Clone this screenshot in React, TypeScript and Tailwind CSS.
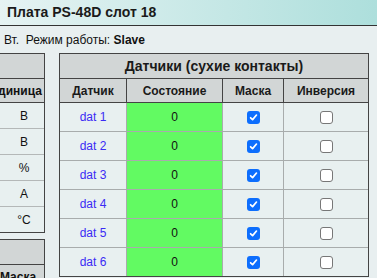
import React from "react";

const Checked = () => (
  <span className="inline-flex w-[13px] h-[13px] rounded-[3px] bg-[#0d6efd] items-center justify-center">
    <svg width="9" height="9" viewBox="0 0 10 10">
      <path d="M1.8 5.3 L4 7.4 L8.3 2.3" fill="none" stroke="white" strokeWidth="1.9" strokeLinecap="round" strokeLinejoin="round" />
    </svg>
  </span>
);

const Unchecked = () => (
  <span className="inline-block w-[13px] h-[13px] rounded-[3px] bg-white border border-[#777]" />
);

const units = ["В", "В", "%", "А", "°C"];

export default function App() {
  const rows = [1, 2, 3, 4, 5, 6];
  return (
    <div className="w-[377px] h-[278px] overflow-hidden bg-[#e8eff0] text-[#111] font-['Liberation_Sans',Arial,sans-serif]">
      <div className="h-[26px] border-b border-[#333] bg-linear-to-r from-[#e6f3f3] to-[#addfdc] flex items-center pl-[7px] text-[14px] font-bold text-[#1a1a1a]">
        Плата PS-48D слот 18
      </div>
      <div className="h-[27px] flex items-center pl-[4px] text-[12px]">
        <span>
          Вт.{"\u00a0"} Режим работы: <span className="font-bold">Slave</span>
        </span>
      </div>
      <div className="flex items-start">
        <div className="w-[64px] ml-[-19px] mr-[14px] shrink-0 flex flex-col">
          <div className="border border-[#444]">
            <div className="h-[25px] bg-[#d2d6d6] border-b border-[#444]" />
            <div className="h-[24px] bg-[#d2d6d6] border-b border-[#444] flex items-center pl-[6px] justify-center text-[12px] font-bold">
              Единица
            </div>
            {units.map((u, i) => (
              <div
                key={i}
                className={
                  "flex items-center justify-center pl-[22px] text-[12px] bg-[#e8f0f0] " +
                  (i < 4 ? "h-[26px] border-b border-[#b4b8b8]" : "h-[25px]")
                }
              >
                {u}
              </div>
            ))}
          </div>
          <div className="mt-[6px] border border-[#444]">
            <div className="h-[25px] bg-[#d2d6d6] border-b border-[#444]" />
            <div className="h-[24px] bg-[#d2d6d6] flex items-center justify-center pl-[10px] text-[12px] font-bold">
              Маска
            </div>
          </div>
        </div>
        <div className="w-[310px] shrink-0 border border-[#444]">
          <div className="h-[25px] bg-[#d2d6d6] border-b border-[#444] flex items-center justify-center text-[14px] font-bold text-[#1a1a1a]">
            Датчики (сухие контакты)
          </div>
          <div className="grid grid-cols-[67px_96px_61px_84px] h-[24px] bg-[#d2d6d6] border-b border-[#444] text-[12px] font-bold text-[#1a1a1a]">
            <div className="border-r border-[#444] flex items-center justify-center">Датчик</div>
            <div className="border-r border-[#444] flex items-center justify-center">Состояние</div>
            <div className="border-r border-[#444] flex items-center justify-center">Маска</div>
            <div className="flex items-center justify-center">Инверсия</div>
          </div>
          {rows.map((n, i) => (
            <div
              key={n}
              className={
                "grid grid-cols-[67px_96px_61px_84px] text-[12px] bg-[#e8f0f0] " +
                (i < rows.length - 1 ? "h-[29px] border-b border-[#a8acac]" : "h-[28px]")
              }
            >
              <div className="border-r border-[#a8acac] flex items-center justify-center text-[#3b2bf5]">dat {n}</div>
              <div className="border-r border-[#a8acac] bg-[#62fa62] flex items-center justify-center">0</div>
              <div className="border-r border-[#a8acac] flex items-center justify-center">
                <Checked />
              </div>
              <div className="flex items-center justify-center">
                <Unchecked />
              </div>
            </div>
          ))}
        </div>
      </div>
    </div>
  );
}
